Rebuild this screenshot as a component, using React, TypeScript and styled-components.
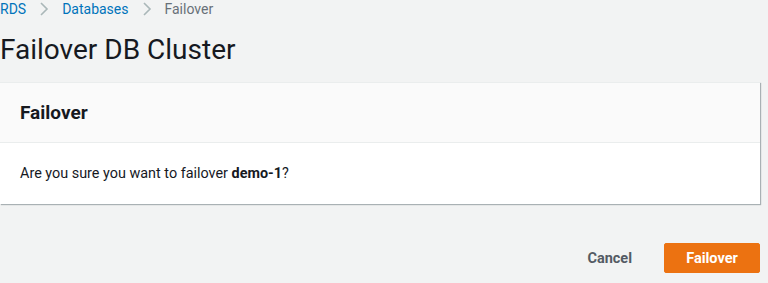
import React from "react";
import styled, { createGlobalStyle } from "styled-components";

const Global = createGlobalStyle`
  html, body { margin: 0; padding: 0; background: #f2f3f3; }
  body { font-family: Roboto, "Noto Sans", Arial, sans-serif; color: #16191f; }
`;

const Page = styled.div`
  width: 760px;
  display: flex;
  flex-direction: column;
`;

const Breadcrumbs = styled.nav`
  display: flex;
  align-items: center;
  height: 18px;
  font-size: 14px;
  line-height: 18px;
`;

const Crumb = styled.a<{ $current?: boolean }>`
  color: ${(p) => (p.$current ? "#687078" : "#0073bb")};
  text-decoration: none;
`;

const Sep = styled.span`
  display: inline-flex;
  width: 36px;
  justify-content: center;
  color: #aab7b8;
`;

const Title = styled.h1`
  margin: 14px 0 0 0;
  font-size: 28px;
  line-height: 36px;
  font-weight: 400;
  color: #16191f;
`;

const Card = styled.section`
  margin-top: 14px;
  background: #fff;
  border-top: 1px solid #eaeded;
  box-shadow: 1px 1px 1px 0 rgba(0, 28, 36, 0.3);
`;

const CardHeader = styled.header`
  background: #fafafa;
  border-bottom: 1px solid #eaeded;
  height: 59px;
  display: flex;
  align-items: center;
  padding: 0 20px;
`;

const CardTitle = styled.h2`
  margin: 0;
  font-size: 19px;
  font-weight: 700;
  color: #16191f;
`;

const CardBody = styled.div`
  height: 61px;
  display: flex;
  align-items: center;
  padding: 0 20px;
  font-size: 14.4px;
  color: #16191f;
`;

const Footer = styled.div`
  margin-top: 39px;
  display: flex;
  justify-content: flex-end;
  align-items: center;
  gap: 32px;
`;

const LinkButton = styled.button`
  border: none;
  background: none;
  padding: 0;
  font: inherit;
  font-size: 14.5px;
  font-weight: 700;
  color: #545b64;
  cursor: pointer;
`;

const PrimaryButton = styled.button`
  border: 1px solid #ec7211;
  background: #ec7211;
  color: #fff;
  border-radius: 2px;
  width: 96px;
  height: 30px;
  font: inherit;
  font-size: 14.5px;
  font-weight: 700;
  cursor: pointer;
`;

const Chevron = () => (
  <svg width="10" height="14" viewBox="0 0 10 14">
    <path d="M2 1l6 6-6 6" fill="none" stroke="#aab7b8" strokeWidth="1.6" />
  </svg>
);

export default function App() {
  return (
    <Page>
      <Global />
      <Breadcrumbs>
        <Crumb href="#">RDS</Crumb>
        <Sep><Chevron /></Sep>
        <Crumb href="#">Databases</Crumb>
        <Sep><Chevron /></Sep>
        <Crumb $current>Failover</Crumb>
      </Breadcrumbs>
      <Title>Failover DB Cluster</Title>
      <Card>
        <CardHeader>
          <CardTitle>Failover</CardTitle>
        </CardHeader>
        <CardBody>
          <span>
            Are you sure you want to failover <b>demo-1</b>?
          </span>
        </CardBody>
      </Card>
      <Footer>
        <LinkButton>Cancel</LinkButton>
        <PrimaryButton>Failover</PrimaryButton>
      </Footer>
    </Page>
  );
}
